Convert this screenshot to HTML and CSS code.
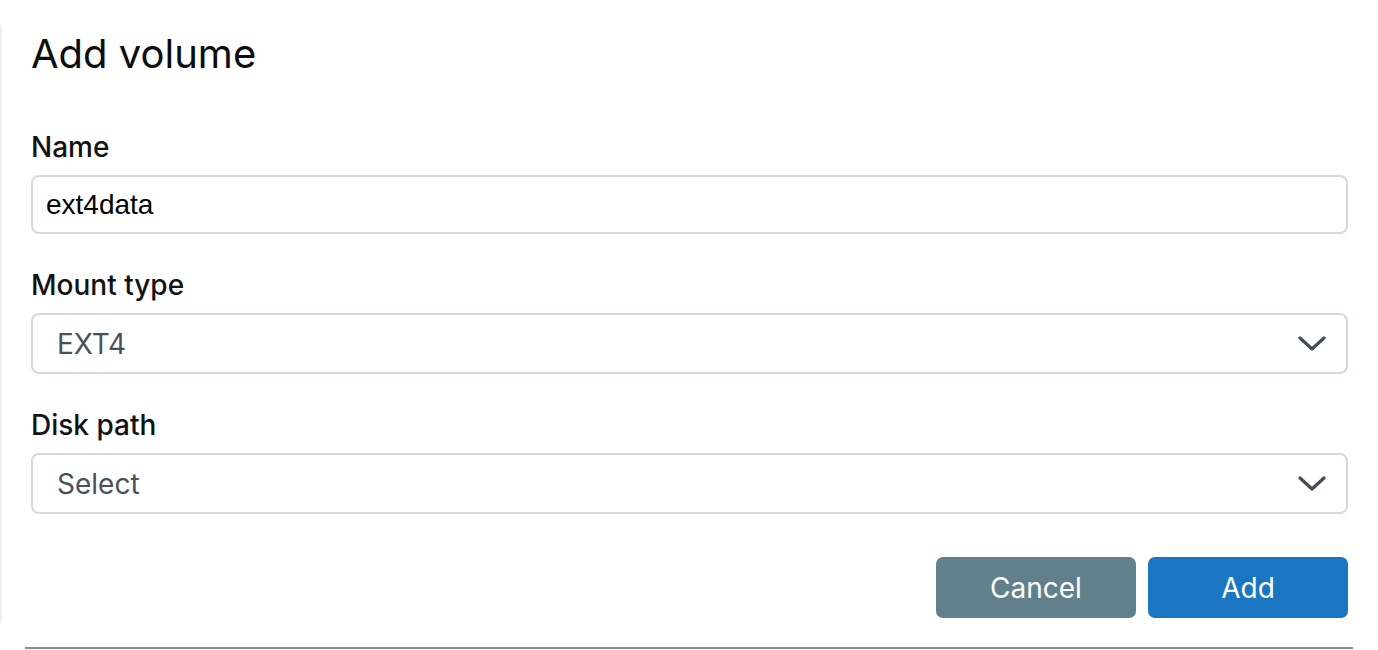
FILE: index.html
```html
<!DOCTYPE html>
<html>
<head>
<meta charset="utf-8">
<link rel="stylesheet" href="styles.css">
</head>
<body>
<div class="page">
  <div class="panel">
    <h1 class="title">Add volume</h1>
    <div class="field">
      <label class="label">Name</label>
      <div class="input">ext4data</div>
    </div>
    <div class="field">
      <label class="label">Mount type</label>
      <div class="select">
        <span>EXT4</span>
        <svg class="chev" width="28" height="16" viewBox="0 0 28 16"><path d="M2 2 L14 13 L26 2" fill="none" stroke="#454b54" stroke-width="3.2" stroke-linecap="round" stroke-linejoin="round"/></svg>
      </div>
    </div>
    <div class="field">
      <label class="label">Disk path</label>
      <div class="select">
        <span>Select</span>
        <svg class="chev" width="28" height="16" viewBox="0 0 28 16"><path d="M2 2 L14 13 L26 2" fill="none" stroke="#454b54" stroke-width="3.2" stroke-linecap="round" stroke-linejoin="round"/></svg>
      </div>
    </div>
    <div class="actions">
      <button class="btn btn-cancel">Cancel</button>
      <button class="btn btn-add">Add</button>
    </div>
  </div>
  <div class="rule"></div>
</div>
</body>
</html>
```
FILE: styles.css
```css
* { box-sizing: border-box; }
html, body { margin: 0; padding: 0; background: #fff; }
body { font-family: Inter, "Noto Sans", sans-serif; color: #111; }
.page { padding-top: 25px; }
.panel {
  border-left: 2px solid #efefef;
  height: 598px;
  padding: 5px 30px 0 29px;
}
.title {
  margin: 0;
  font-size: 40px;
  line-height: 48px;
  font-weight: 400;
  color: #0d0d0d;
}
.field { display: flex; flex-direction: column; }
.field:first-of-type { margin-top: 51px; }
.field + .field { margin-top: 33px; }
.label {
  font-size: 28px;
  line-height: 36px;
  font-weight: 500;
  color: #121212;
  margin-bottom: 10px;
}
.input {
  height: 59px;
  border: 2px solid #d5d8dc;
  border-radius: 8px;
  padding: 0 13px;
  display: flex;
  align-items: center;
  font-family: "Liberation Sans", Arial, sans-serif;
  font-size: 28px;
  color: #000;
}
.select {
  height: 61px;
  border: 2px solid #d5d8dc;
  border-radius: 8px;
  padding: 0 20px 0 24px;
  display: flex;
  align-items: center;
  justify-content: space-between;
  font-size: 28px;
  color: #4a515b;
  background: #fff;
}
.chev { display: block; }
.actions {
  display: flex;
  justify-content: flex-end;
  gap: 12px;
  margin-top: 43px;
}
.btn {
  width: 200px;
  height: 61px;
  border: none;
  border-radius: 7px;
  font-family: Inter, "Noto Sans", sans-serif;
  font-size: 28px;
  color: #fff;
  padding: 0;
}
.btn-cancel { background: #627f8c; }
.btn-add { background: #1b76c1; }
.rule {
  margin: 24px 25px 0 25px;
  height: 2px;
  background: #8c8c8c;
}
```
